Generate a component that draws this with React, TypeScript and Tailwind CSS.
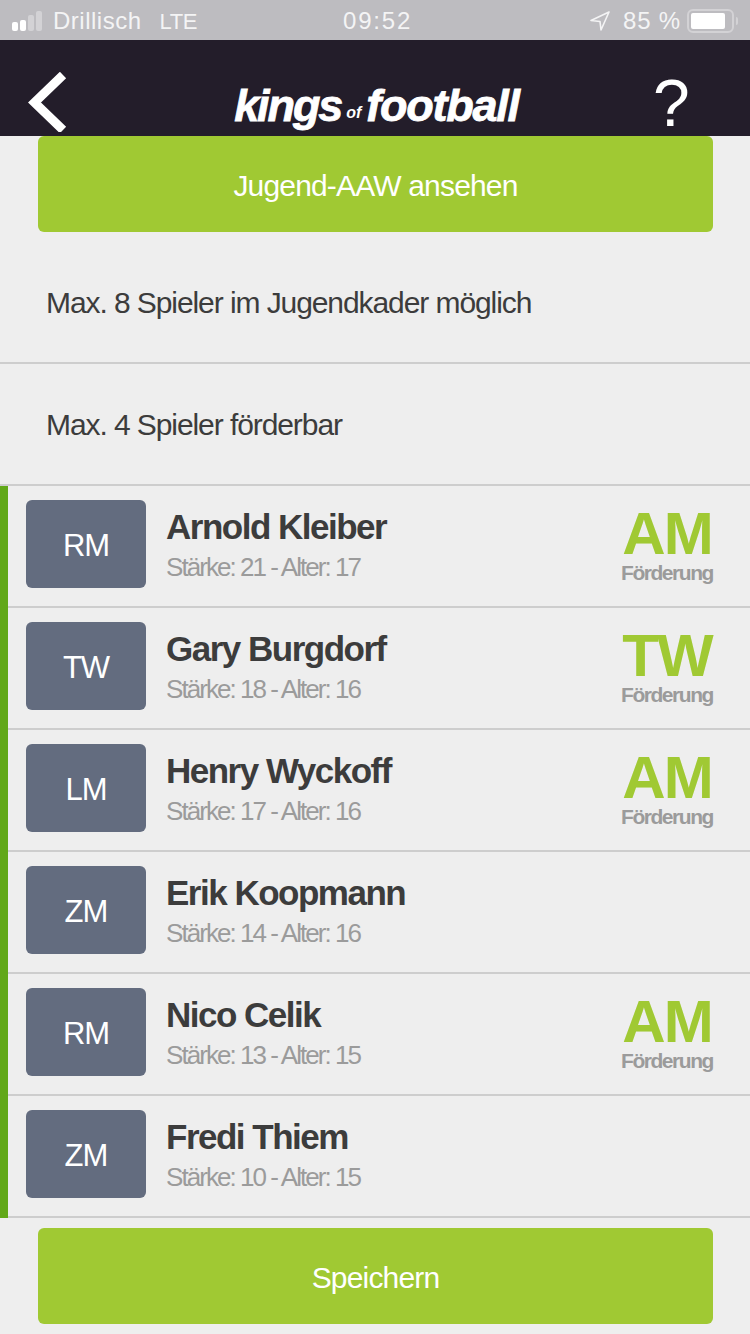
const players = [
  { pos: "RM", name: "Arnold Kleiber", sub: "Stärke: 21 - Alter: 17", promo: "AM" },
  { pos: "TW", name: "Gary Burgdorf", sub: "Stärke: 18 - Alter: 16", promo: "TW" },
  { pos: "LM", name: "Henry Wyckoff", sub: "Stärke: 17 - Alter: 16", promo: "AM" },
  { pos: "ZM", name: "Erik Koopmann", sub: "Stärke: 14 - Alter: 16", promo: "" },
  { pos: "RM", name: "Nico Celik", sub: "Stärke: 13 - Alter: 15", promo: "AM" },
  { pos: "ZM", name: "Fredi Thiem", sub: "Stärke: 10 - Alter: 15", promo: "" },
];

function StatusBar() {
  return (
    <div className="h-[40px] pt-[2px] bg-[#bdbcc0] flex items-center justify-between text-[#f4f4f5] text-[24px] pl-[12px] pr-[12px] relative">
      <div className="flex items-center">
        <div className="flex items-end gap-[2px] mr-[11px]">
          <span className="w-[6px] h-[9px] rounded-[2px] bg-white" />
          <span className="w-[6px] h-[11px] rounded-[2px] bg-white" />
          <span className="w-[6px] h-[16px] rounded-[2px] bg-[#d3d2d5]" />
          <span className="w-[6px] h-[20px] rounded-[2px] bg-[#d3d2d5]" />
        </div>
        <span className="tracking-[0.5px]">Drillisch</span>
        <span className="ml-[18px] text-[22px] tracking-[-0.4px]">LTE</span>
      </div>
      <span className="absolute left-[343px] top-[7px] leading-[28px] tracking-[1.8px]">09:52</span>
      <div className="flex items-center">
        <svg width="20" height="20" viewBox="0 0 20 20" className="mr-[13px]">
          <path d="M19 1 L1 9.500 L10 10.500 L11 19 Z" fill="none" stroke="#f4f4f5" strokeWidth="1.6" strokeLinejoin="round" />
        </svg>
        <span className="tracking-[0.8px] mr-[6px]">85 %</span>
        <div className="w-[47px] h-[24px] rounded-[6px] border-2 border-[#d3d2d5] p-[2px] flex">
          <div className="w-[34px] bg-white rounded-[2px]" />
        </div>
        <span className="w-[2px] h-[8px] ml-[2px] bg-[#d3d2d5] rounded-r-[2px]" />
      </div>
    </div>
  );
}

function Header() {
  return (
    <div className="h-[96px] bg-[#231d2a] relative flex justify-center">
      <svg width="40" height="60" viewBox="0 0 40 60" className="absolute left-[28px] top-[32px]">
        <path d="M35 3 L6.500 30.500 L35 58" fill="none" stroke="#ffffff" strokeWidth="9" />
      </svg>
      <div className="mt-[41px] ml-[3px] text-white italic font-bold text-[45px] leading-[50px] flex items-baseline [-webkit-text-stroke:0.8px_white]">
        <span className="tracking-[-2.1px]">kings</span>
        <span className="self-center mt-[8px] text-[16px] leading-[16px] font-bold tracking-[0px] mx-[5px] [-webkit-text-stroke:0px_white]">of</span>
        <span className="tracking-[-1.25px]">football</span>
      </div>
      <span className="absolute left-[653px] top-[30px] text-white text-[66px] leading-[66px]">?</span>
    </div>
  );
}

function GreenButton({ label }: { label: string }) {
  return (
    <div className="mx-[38px] w-[675px] h-[96px] pt-[2px] rounded-[6px] bg-[#a0c933] text-white text-[30px] tracking-[-0.83px] flex items-center justify-center">
      {label}
    </div>
  );
}

function Row({ p }: { p: (typeof players)[number] }) {
  return (
    <div className="h-[122px] border-b-2 border-[#cdcdcd] flex items-center pl-[26px] pb-[4px] relative">
      <span className="absolute left-0 top-0 bottom-[-2px] w-[8px] bg-[#61a818]" />
      <div className="w-[120px] h-[88px] pt-[4px] rounded-[6px] bg-[#636c7f] text-white text-[31px] tracking-[-1px] flex items-center justify-center">
        {p.pos}
      </div>
      <div className="ml-[20px] mt-[2px] flex-1">
        <div className="text-[35px] leading-[40px] font-bold text-[#3c3c3c] tracking-[-1.5px]">{p.name}</div>
        <div className="mt-[4px] text-[26px] leading-[32px] text-[#9b9b9b] tracking-[-1.95px]">{p.sub}</div>
      </div>
      {p.promo && (
        <div className="w-[92px] mr-[37px] mt-[5px] flex flex-col items-center">
          <div className="text-[60px] leading-[52px] font-bold text-[#a0c933] tracking-[-2px]">{p.promo}</div>
          <div className="mt-[1px] text-[21px] leading-[24px] font-bold text-[#9b9b9b] tracking-[-1.45px]">Förderung</div>
        </div>
      )}
    </div>
  );
}

export default function App() {
  return (
    <div className="w-[750px] h-[1334px] bg-[#eeeeee] overflow-hidden font-['Liberation_Sans',Arial,sans-serif]">
      <StatusBar />
      <Header />
      <GreenButton label="Jugend-AAW ansehen" />
      <div className="h-[132px] pt-[10px] border-b-2 border-[#cdcdcd] flex items-center pl-[46px] text-[30px] tracking-[-1.08px] text-[#3c3c3c]">
        Max. 8 Spieler im Jugendkader möglich
      </div>
      <div className="h-[122px] border-b-2 border-[#cdcdcd] flex items-center pl-[46px] text-[30px] tracking-[-1.08px] text-[#3c3c3c]">
        Max. 4 Spieler förderbar
      </div>
      {players.map((p) => (
        <Row key={p.name} p={p} />
      ))}
      <div className="mt-[10px]">
        <GreenButton label="Speichern" />
      </div>
    </div>
  );
}
